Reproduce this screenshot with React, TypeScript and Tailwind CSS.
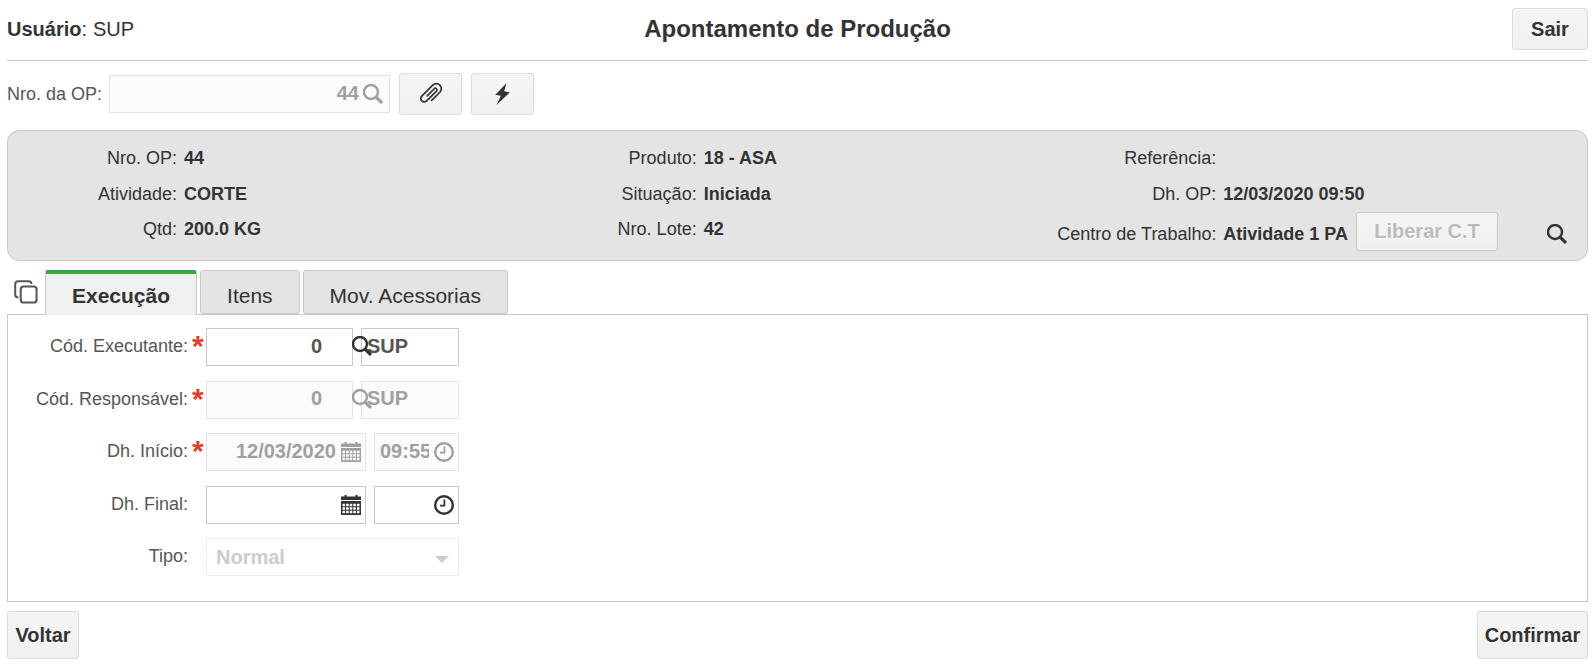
import type { ReactNode } from "react";

const Svg = ({ className, children }: { className: string; children: ReactNode }) => (
	<svg viewBox="0 0 20 20" className={className} fill="none" stroke="currentColor" aria-hidden="true">
		{children}
	</svg>
);

// Icons //
const SearchIcon = ({ className = "" }) => (
	<Svg className={`size-5 shrink-0 ${className}`}>
		<circle cx="8" cy="8" r="7" strokeWidth="2.4" />
		<path d="M12.6 12.6 L19 19" strokeWidth="3.2" />
	</Svg>
);

const CalendarIcon = ({ className = "" }) => (
	<Svg className={`size-5 shrink-0 ${className}`}>
		<path d="M0 1.5H3.5V0H5.5V1.5H14.5V0H16.5V1.5H20V5H0Z" fill="currentColor" stroke="none" />
		<path d="M0 6H20V20H0Z" fill="currentColor" stroke="none" />
		<path d="M1.5 10H18.5M1.5 13.5H18.5M1.5 17H18.5" stroke="white" strokeWidth="2.4" strokeDasharray="2.6 1" />
	</Svg>
);

const ClockIcon = ({ className = "" }) => (
	<Svg className={`size-5 shrink-0 ${className}`}>
		<circle cx="10" cy="10" r="8.8" strokeWidth="2.4" />
		<path d="M10.4 4.5V10.7H6" strokeWidth="1.8" />
	</Svg>
);

const ClipIcon = () => (
	<svg viewBox="-12 -12 24 24" className="size-6" fill="none" stroke="currentColor" aria-hidden="true">
		<path
			transform="rotate(-45)"
			d="M-4 -1.4H6A1.6 1.6 0 0 1 6 1.8H-8A3.4 3.4 0 0 1 -8 -5H7.5A5 5 0 0 1 7.5 5H-4"
			strokeWidth="1.7"
			strokeLinecap="round"
		/>
	</svg>
);

const BoltIcon = () => (
	<Svg className="size-6">
		<path d="M12.8 1L3.6 10.6L8.2 11.4L4.6 19.2L15.6 8.8L11 7.8Z" fill="currentColor" stroke="none" />
	</Svg>
);

const CopyIcon = () => (
	<Svg className="size-6">
		<rect x="5.6" y="5.4" width="13.2" height="13.4" rx="2.4" strokeWidth="1.7" />
		<path d="M3.6 14.4C1.9 14.4 1 13.4 1 12V3.5C1 2 1.9 1 3.6 1H12C13.6 1 14.6 1.9 14.6 3.4" strokeWidth="1.7" />
	</Svg>
);

const buttonStyle =
	"flex items-center justify-center rounded-[3px] border bg-linear-to-b from-[#f5f5f5] to-[#f0f0f0] text-xl font-bold [text-shadow:0_1px_1px_white]";
const enabledButton = "border-[#dcdcdc] text-[#333]";
const enabledInput = "border-[#c8c8c8] bg-white text-[#555]";
const disabledInput = "border-[#e3e3e3] bg-[#fbfbfb] text-[#a0a0a0]";
const inputStyle = "h-[38px] min-w-0 border pb-[2px] text-xl font-bold outline-none";

const summary = [
	[
		{ label: "Nro. OP:", value: "44" },
		{ label: "Atividade:", value: "CORTE" },
		{ label: "Qtd:", value: "200.0 KG" },
	],
	[
		{ label: "Produto:", value: "18 - ASA" },
		{ label: "Situação:", value: "Iniciada" },
		{ label: "Nro. Lote:", value: "42" },
	],
	[
		{ label: "Referência:", value: "" },
		{ label: "Dh. OP:", value: "12/03/2020 09:50" },
		{ label: "Centro de Trabalho:", value: "Atividade 1 PA", action: "Liberar C.T" },
	],
];

const Summary = () => (
	<section className="mt-[15px] grid h-[131px] grid-cols-3 rounded-xl border border-[#c8c8c8] bg-[#e4e4e4] px-[10px] pt-[9px] text-lg text-[#333]">
		{summary.map((column, i) => (
			<dl key={i}>
				{column.map(({ label, value, action }) => (
					<div key={label} className={`flex items-center ${action ? "h-11" : "h-9 last:h-[34px]"}`}>
						<dt className="w-[159px] shrink-0 text-right whitespace-nowrap">{label}</dt>
						<dd className="ml-[7px] flex flex-1 items-center whitespace-nowrap">
							<b>{value}</b>
							{action && (
								<>
									<button
										disabled
										className={`${buttonStyle} mb-[6px] ml-2 h-[39px] w-[142px] border-[#c8c8c8] text-[#bbb]`}
									>
										{action}
									</button>
									<button aria-label="Pesquisar" className="mr-[10px] ml-auto">
										<SearchIcon />
									</button>
								</>
							)}
						</dd>
					</div>
				))}
			</dl>
		))}
	</section>
);

const FieldLabel = ({ id, label, required }: { id: string; label: string; required?: boolean }) => (
	<label htmlFor={id} className="flex w-[198px] shrink-0 items-center justify-end gap-1 pb-[2px] text-lg text-[#555]">
		{label}
		<span className="h-7 w-[14px] text-3xl leading-7 font-bold text-[#d9402f]">{required && "*"}</span>
	</label>
);

type PersonProps = { id: string; label: string; disabled?: boolean };

const PersonRow = ({ id, label, disabled }: PersonProps) => {
	const colors = disabled ? disabledInput : enabledInput;
	return (
		<div className="flex items-center">
			<FieldLabel id={id} label={label} required />
			<div className="relative flex gap-2">
				<input id={id} disabled={disabled} defaultValue="0" className={`${inputStyle} ${colors} w-[147px] pr-[30px] text-right`} />
				<input aria-label={`${label} nome`} disabled={disabled} defaultValue="SUP" className={`${inputStyle} ${colors} w-[98px] pl-[5px]`} />
				<SearchIcon className={`absolute top-2 left-[146px] ${disabled ? "text-[#a0a0a0]" : "text-[#333]"}`} />
			</div>
		</div>
	);
};

type DateRowProps = { id: string; label: string; date: string; time: string; disabled?: boolean };

const DateRow = ({ id, label, date, time, disabled }: DateRowProps) => {
	const colors = disabled ? disabledInput : enabledInput;
	const icon = disabled ? "text-[#a0a0a0]" : "text-[#333]";
	return (
		<div className="flex items-center">
			<FieldLabel id={id} label={label} required={disabled} />
			<div className="flex gap-2">
				<div className={`flex h-[38px] w-40 items-center gap-[5px] border pr-1 ${colors}`}>
					<input id={id} disabled={disabled} defaultValue={date} className="w-0 flex-1 pb-[2px] text-right text-xl font-bold outline-none" />
					<CalendarIcon className={icon} />
				</div>
				<div className={`flex h-[38px] w-[85px] items-center gap-[5px] border pr-1 pl-[5px] ${colors}`}>
					<input aria-label={`${label} hora`} disabled={disabled} defaultValue={time} className="w-0 flex-1 pb-[2px] text-xl font-bold outline-none" />
					<ClockIcon className={icon} />
				</div>
			</div>
		</div>
	);
};

const tabs = [
	{ name: "Execução", active: true },
	{ name: "Itens", active: false },
	{ name: "Mov. Acessorias", active: false },
];

const App = () => {
	return (
		<main className="bg-white px-[7px] pt-2 pb-[6px] font-['Liberation_Sans',Arial,sans-serif] text-[#333]">
			<header className="grid grid-cols-[1fr_auto_1fr] items-center border-b border-[#c8c8c8] pb-[10px]">
				<p className="flex gap-[6px] text-xl">
					<span>
						<b>Usuário</b>:
					</span>
					<span>SUP</span>
				</p>
				<h1 className="text-2xl font-bold">Apontamento de Produção</h1>
				<button className={`${buttonStyle} ${enabledButton} h-[42px] w-[76px] justify-self-end`}>Sair</button>
			</header>

			<div className="mt-3 flex items-center">
				<label htmlFor="op" className="w-[102px] text-lg text-[#555]">
					Nro. da OP:
				</label>
				<div className={`flex h-[38px] w-[281px] items-center gap-1 border pr-[6px] ${disabledInput}`}>
					<input id="op" disabled defaultValue="44" className="w-0 flex-1 pb-[2px] text-right text-xl font-bold" />
					<SearchIcon />
				</div>
				<button aria-label="Anexar" className={`${buttonStyle} ${enabledButton} ml-[9px] h-[42px] w-[63px]`}>
					<ClipIcon />
				</button>
				<button aria-label="Ações" className={`${buttonStyle} ${enabledButton} ml-[9px] h-[42px] w-[63px]`}>
					<BoltIcon />
				</button>
			</div>

			<Summary />

			<div className="mt-[9px] flex items-end" role="tablist">
				<button aria-label="Copiar" className="mr-[7px] ml-[7px] self-center text-[#555]">
					<CopyIcon />
				</button>
				<div className="-mb-px flex gap-[3px]">
					{tabs.map(({ name, active }) => (
						<button
							key={name}
							role="tab"
							aria-selected={active}
							className={
								active
									? "h-[45px] rounded-t-[3px] border-x border-t-4 border-x-[#c8c8c8] border-t-[#35a745] bg-[#f0f0f0] px-[26px] pt-[2px] text-[21px] font-bold"
									: "mb-px h-11 rounded-[3px] border border-[#c8c8c8] bg-[#e4e4e4] px-[26px] pt-2 text-[21px]"
							}
						>
							{name}
						</button>
					))}
				</div>
			</div>

			<section className="border border-[#c8c8c8] pt-[13px] pb-[25px]">
				<form className="grid min-h-[248px] content-between">
					<PersonRow id="executante" label="Cód. Executante:" />
					<PersonRow id="responsavel" label="Cód. Responsável:" disabled />
					<DateRow id="inicio" label="Dh. Início:" date="12/03/2020" time="09:55" disabled />
					<DateRow id="final" label="Dh. Final:" date="" time="" />
					<div className="flex items-center">
						<FieldLabel id="tipo" label="Tipo:" />
						<div className="relative">
							<select
								id="tipo"
								disabled
								className="h-[38px] w-[253px] appearance-none border border-[#eee] bg-white pl-[9px] text-xl font-bold text-[#ccc] opacity-100"
							>
								<option>Normal</option>
							</select>
							<Svg className="absolute top-[18px] right-[10px] h-[7px] w-[14px]">
								<path d="M-10 0H30L10 20Z" fill="#ccc" stroke="none" />
							</Svg>
						</div>
					</div>
				</form>
			</section>

			<footer className="mt-[9px] flex justify-between">
				<button className={`${buttonStyle} ${enabledButton} h-12 w-[72px]`}>Voltar</button>
				<button className={`${buttonStyle} ${enabledButton} h-12 w-[111px]`}>Confirmar</button>
			</footer>
		</main>
	);
};

export default App;
